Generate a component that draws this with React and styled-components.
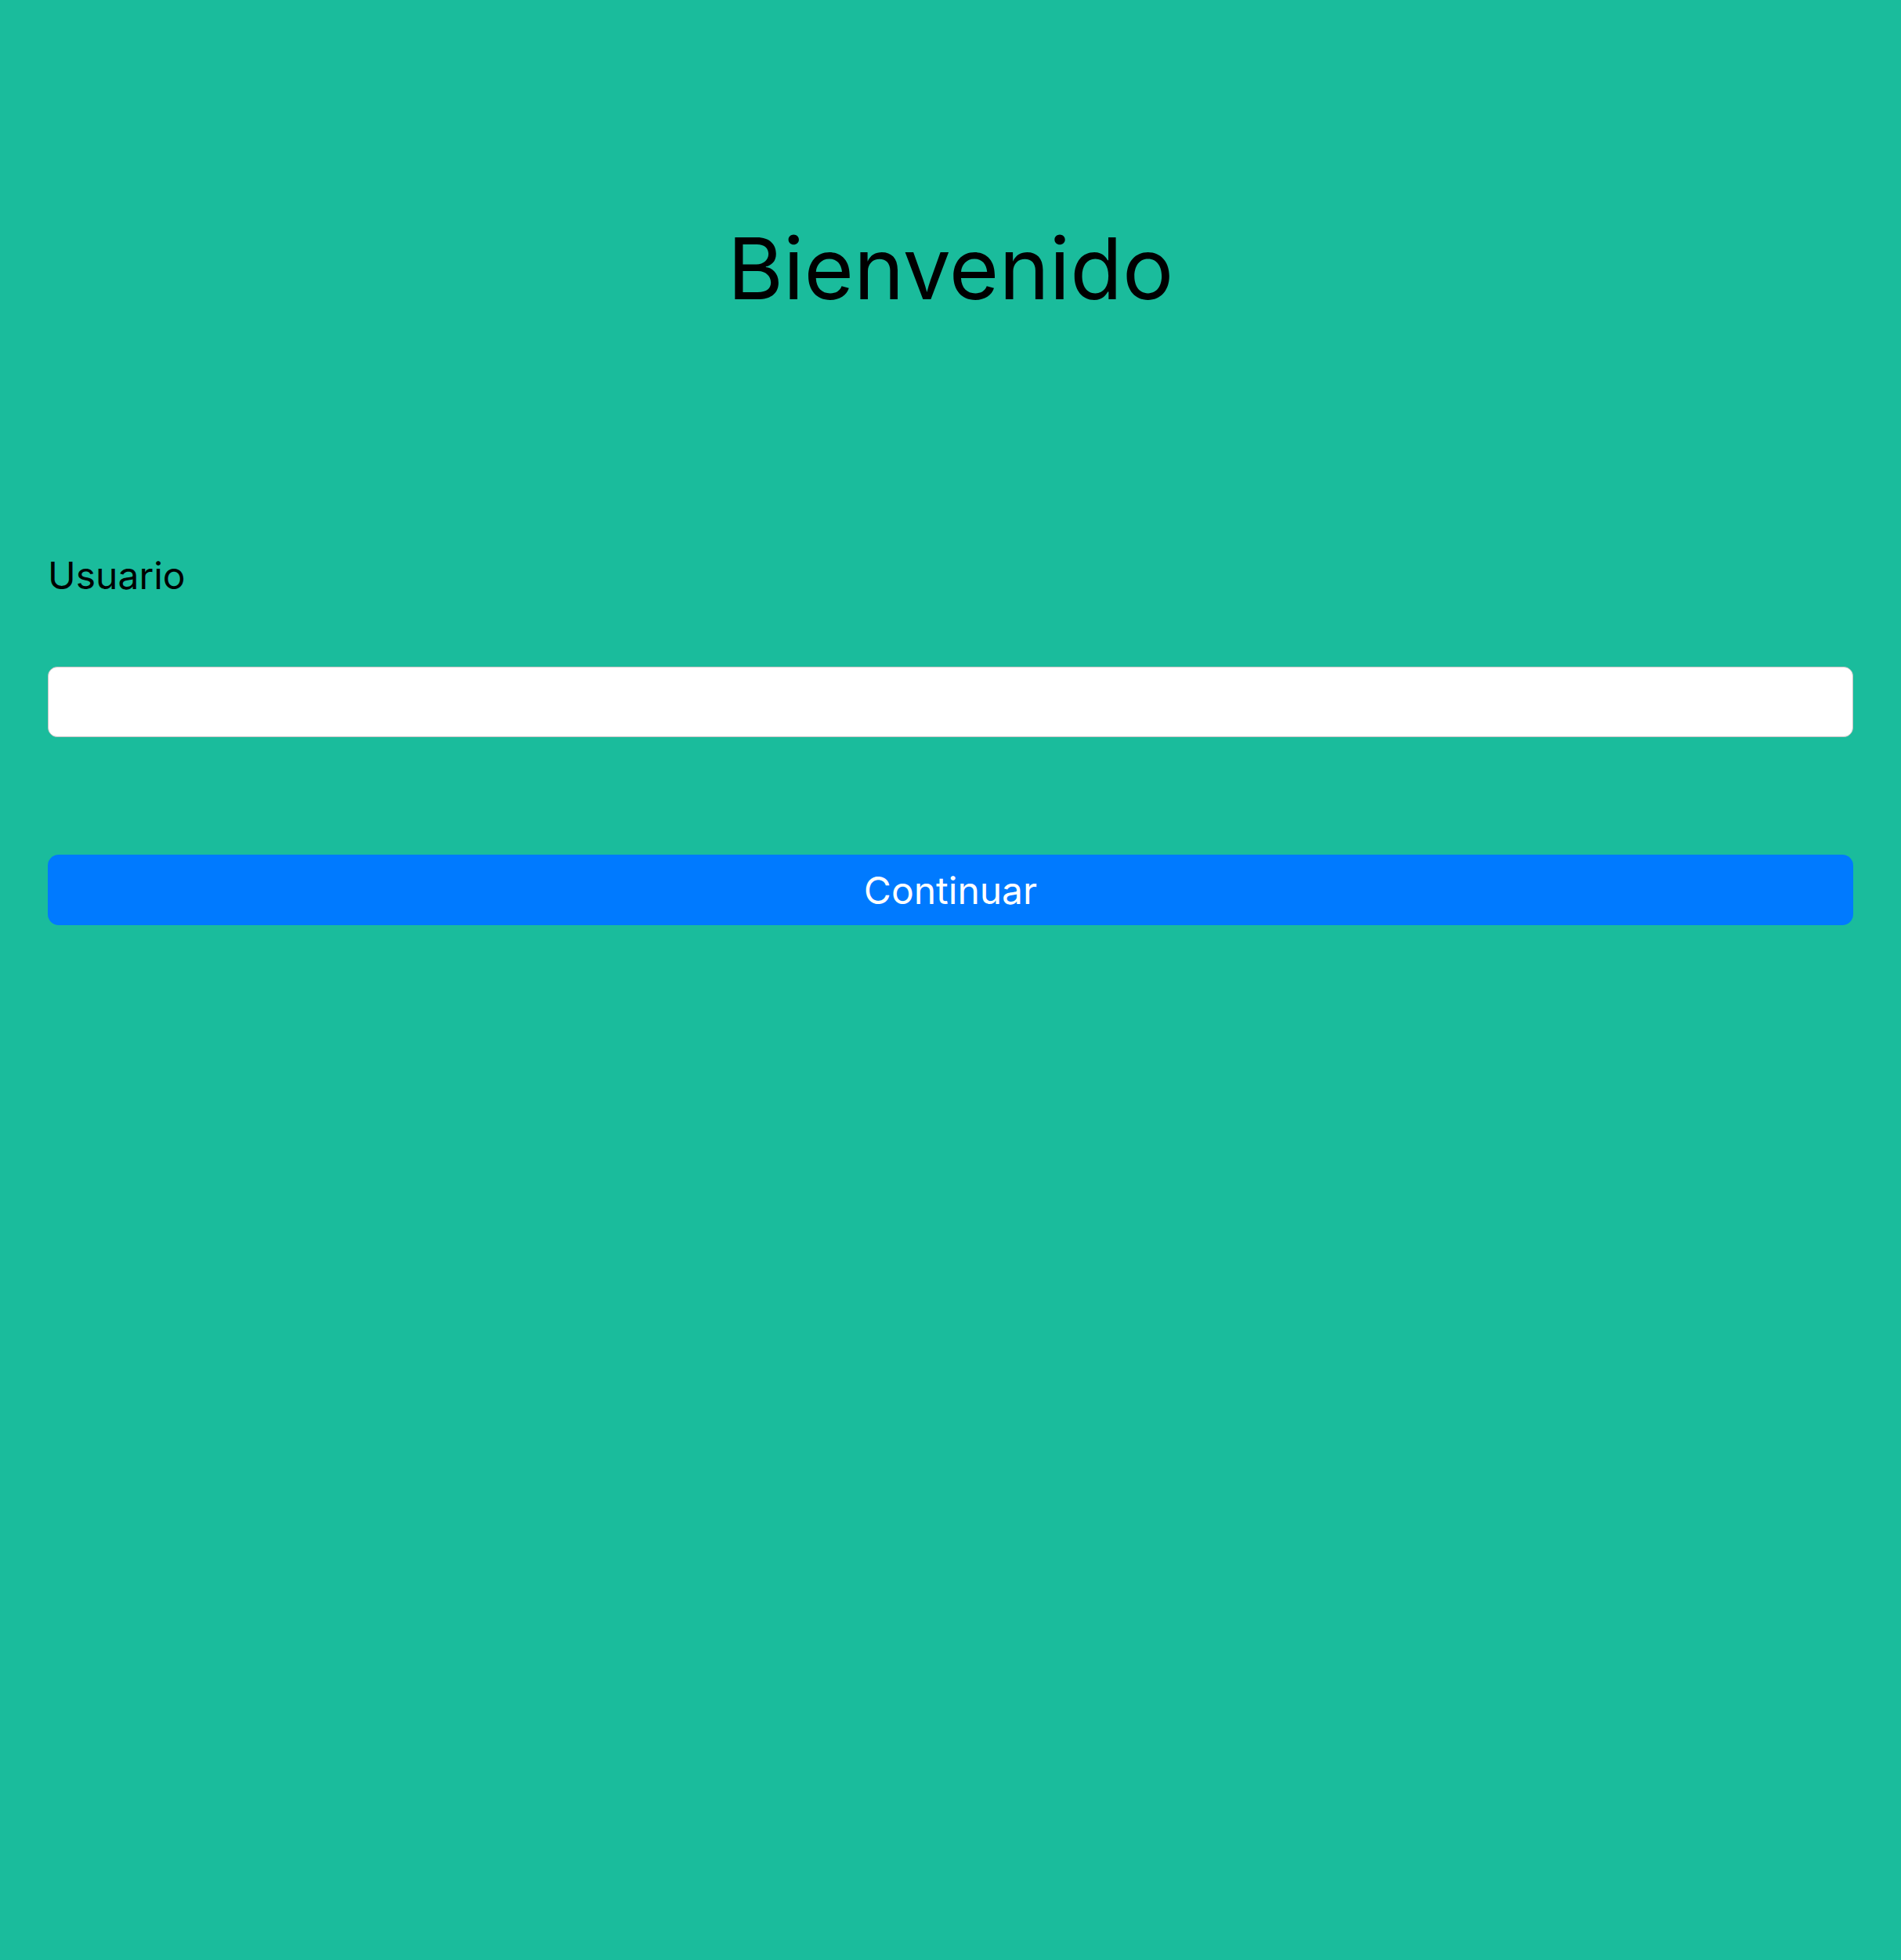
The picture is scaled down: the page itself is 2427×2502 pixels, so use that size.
import React, { useState } from 'react';
import styled, { createGlobalStyle } from 'styled-components';

const GlobalStyle = createGlobalStyle`
    html, body {
        margin:0;
        padding:0;
        background-color:#1ABC9C;
    }
    * {
        box-sizing:border-box;
    }
`

const Page = styled.div`
    display:flex;
    flex-direction:column;
    min-height:100vh;
    padding:0 61px;
    background-color:#1ABC9C;
    font-family:Inter, "Noto Sans", sans-serif;
`

const Title = styled.h1`
    margin:0;
    padding-top:272px;
    text-align:center;
    font-size:109px;
    font-weight:400;
    line-height:140px;
    color:#000;
`

const Label = styled.label`
    display:block;
    margin-top:292px;
    font-size:48px;
    line-height:62px;
    color:#000;
`

const Field = styled.input`
    width:100%;
    height:90px;
    margin-top:85px;
    padding:0 24px;
    border:1px solid #c4c4c4;
    border-radius:12px;
    background-color:#fff;
    font-size:48px;
    font-family:inherit;
    outline:none;
`

const Btn = styled.button`
    width:100%;
    height:90px;
    margin-top:150px;
    border:0;
    border-radius:14px;
    background-color:#007AFF;
    color:#fff;
    font-size:48px;
    font-family:inherit;
    cursor:pointer;
`

const App = () => {
    const [user, setUser] = useState("");
    return (
        <Page>
            <GlobalStyle />
            <Title>Bienvenido</Title>
            <Label htmlFor="usuario">Usuario</Label>
            <Field id="usuario" value={user} onChange={(e) => setUser(e.target.value)} />
            <Btn>Continuar</Btn>
        </Page>
    );
};

export default App;
